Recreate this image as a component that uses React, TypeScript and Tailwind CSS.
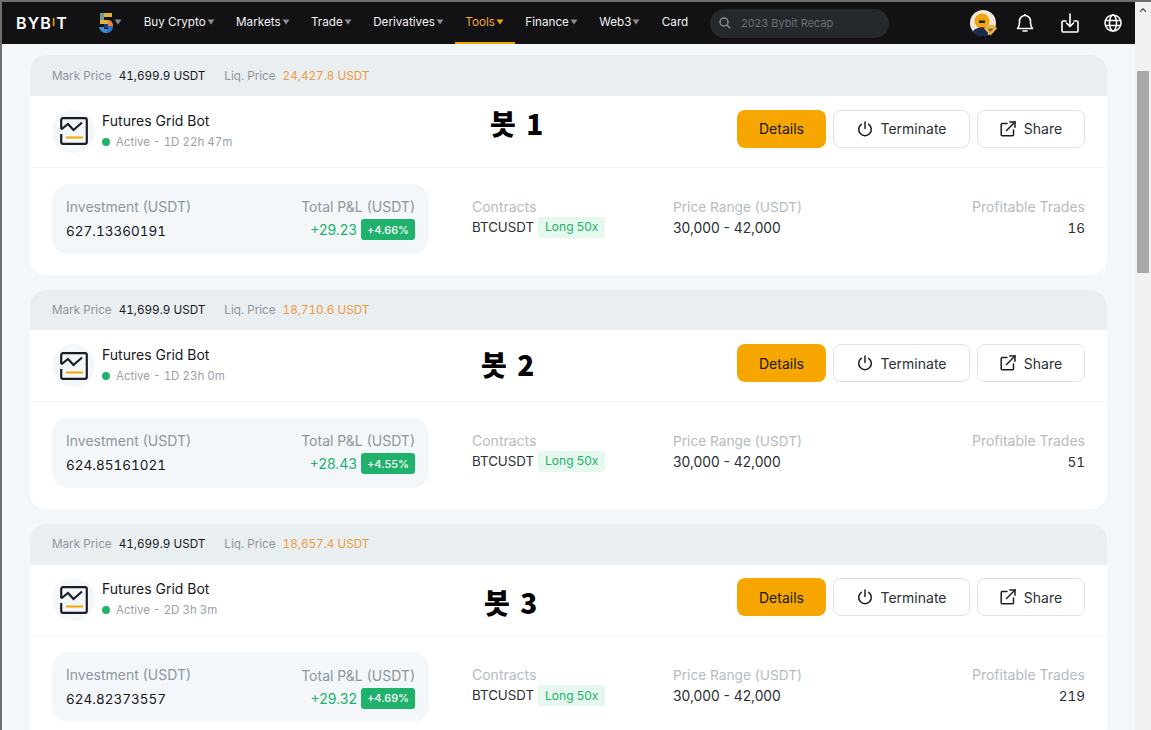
import { ChevronUp } from 'lucide-react';

const navItems = [
    { label: 'Buy Crypto', caret: true },
    { label: 'Markets', caret: true },
    { label: 'Trade', caret: true },
    { label: 'Derivatives', caret: true },
    { label: 'Tools', caret: true, active: true },
    { label: 'Finance', caret: true },
    { label: 'Web3', caret: true },
    { label: 'Card', caret: false },
];

const bots = [
    { liq: '24,427.8', time: '1D 22h 47m', investment: '627.13360191', pnl: '+29.23', pct: '+4.66%', trades: '16', tag: '봇 1', tagClass: 'left-[488px] top-[101px]' },
    { liq: '18,710.6', time: '1D 23h 0m', investment: '624.85161021', pnl: '+28.43', pct: '+4.55%', trades: '51', tag: '봇 2', tagClass: 'left-[479px] top-[342px]' },
    { liq: '18,657.4', time: '2D 3h 3m', investment: '624.82373557', pnl: '+29.32', pct: '+4.69%', trades: '219', tag: '봇 3', tagClass: 'left-[482px] top-[580px]' },
];

const Caret = ({ active }: { active?: boolean }) => (
    <svg width="8" height="6" viewBox="0 0 8 6" className="mt-[-2px]">
        <path d="M0.5 0.5h7L4 5.5z" fill={active ? '#f7a600' : '#8a8d92'} />
    </svg>
);

const FiveLogo = () => (
    <svg width="14" height="20" viewBox="0 0 14 20">
        <path d="M1 0h12v4H5v3h4v4H1z" fill="#e0b13f" />
        <path d="M1 0h4v7H1z" fill="#6f9f8c" />
        <path d="M9 7c3 0 5 2 5 6H9z" fill="#e8873a" />
        <path d="M9 13h5c0 4-2 7-6 7v-4l1-1z" fill="#2f6fc4" />
        <path d="M0 14h5v2h3v4c-4 0-7-2-8-6z" fill="#3d8fd6" />
        <path d="M5 11h4v4H5z" fill="#1d3f78" />
    </svg>
);

const Avatar = () => (
    <svg width="27" height="27" viewBox="0 0 27 27">
        <circle cx="13" cy="13" r="13" fill="#f1e7d6" />
        <circle cx="12" cy="11" r="7.5" fill="#f0a30a" />
        <path d="M9 10.5h6v2.5H9z" fill="#1b1d22" />
        <path d="M3 21c3-4 12-5 15-2v7H10c-3 0-6-2-7-5z" fill="#1f2b4d" />
        <path d="M14 18.5l3-3.5h7l3 3.5-6.500 7z" fill="#e9b44c" />
        <path d="M17.500 18.500h6l-3 3.500z" fill="#8a6a24" />
    </svg>
);

const BotIcon = () => (
    <svg width="28" height="28" viewBox="0 0 28 28" fill="none" stroke="#1b1d22" strokeWidth="2.200">
        <path d="M1.200 12V3A1.800 1.800 0 0 1 3 1.200h22A1.800 1.800 0 0 1 26.800 3v22a1.800 1.800 0 0 1-1.800 1.800H3A1.800 1.800 0 0 1 1.200 25v-8" />
        <path d="M1.200 12.500L8 7l5.500 6L22 5.500" />
        <path d="M6 20.500h17" stroke="#f7a600" />
    </svg>
);

const PowerIcon = () => (
    <svg width="16" height="16" viewBox="0 0 16 16" fill="none" stroke="#1b1d22" strokeWidth="1.500" strokeLinecap="round">
        <path d="M8 1v6.500" />
        <path d="M4.300 3.300a6.300 6.300 0 1 0 7.400 0" />
    </svg>
);

const ShareIcon = () => (
    <svg width="16" height="16" viewBox="0 0 16 16" fill="none" stroke="#1b1d22" strokeWidth="1.500" strokeLinecap="round">
        <path d="M7 2.500H2.200a1 1 0 0 0-1 1v10.300a1 1 0 0 0 1 1h10.300a1 1 0 0 0 1-1V9" />
        <path d="M6.500 9.500L15 1" />
        <path d="M9.800 1H15v5.200" />
    </svg>
);

const BotCard = ({ bot }: { bot: (typeof bots)[number] }) => (
    <div className="h-[219.200px] w-[1077px] shrink-0 overflow-hidden rounded-[16px] bg-white">
        <div className="flex h-[40.800px] items-center bg-[#e9eef0] pl-[22px] pt-[2px] text-[11.700px] tabular-nums">
            <span className="text-[#8e959e]">Mark Price</span>
            <span className="ml-[7px] text-[#16181c]">41,699.9 USDT</span>
            <span className="ml-[19px] text-[#8e959e]">Liq. Price</span>
            <span className="ml-[7px] text-[#ed9a44]">{bot.liq} USDT</span>
        </div>
        <div className="flex h-[71.600px] items-center justify-between border-b border-[#f2f4f6] pl-[22px] pr-[22px]">
            <div className="flex items-center gap-[7px]">
                <div className="flex h-[43px] w-[43px] items-center justify-center rounded-full bg-[#f4f7f9]">
                    <BotIcon />
                </div>
                <div className="flex flex-col gap-[3px]">
                    <span className="text-[14px] leading-[18px] text-[#16181c]">Futures Grid Bot</span>
                    <div className="flex items-center gap-[6px] text-[11.500px] leading-[18px] text-[#9aa1aa] tabular-nums">
                        <span className="h-[8px] w-[8px] rounded-full bg-[#20b26c]" />
                        <span>Active - {bot.time}</span>
                    </div>
                </div>
            </div>
            <div className="mb-[5px] flex items-center gap-[7px] text-[14px]">
                <button className="h-[38px] w-[89px] rounded-[8px] bg-[#f7a600] text-[#16181c]">Details</button>
                <button className="flex h-[38px] w-[137px] items-center justify-center gap-[8px] rounded-[8px] border border-[#dfe3e7] text-[#2b2f36]">
                    <PowerIcon />
                    Terminate
                </button>
                <button className="flex h-[38px] w-[108px] items-center justify-center gap-[8px] rounded-[8px] border border-[#dfe3e7] text-[#2b2f36]">
                    <ShareIcon />
                    Share
                </button>
            </div>
        </div>
        <div className="flex items-start pl-[22px] pr-[22px] pt-[16px] text-[14px]">
            <div className="flex h-[70px] w-[377px] items-center justify-between rounded-[16px] bg-[#f4f7f9] px-[14px]">
                <div className="flex flex-col gap-[4px]">
                    <span className="leading-[20px] text-[#8e959e]">Investment (USDT)</span>
                    <span className="text-[13.500px] leading-[20px] text-[#16181c] tabular-nums">{bot.investment}</span>
                </div>
                <div className="flex flex-col items-end gap-[2px]">
                    <span className="leading-[20px] text-[#8e959e]">Total P&amp;L (USDT)</span>
                    <div className="flex items-center gap-[4px]">
                        <span className="text-[#20b26c]">{bot.pnl}</span>
                        <span className="flex h-[21px] w-[54px] items-center justify-center rounded-[3px] bg-[#20b26c] text-[11px] font-medium text-white">{bot.pct}</span>
                    </div>
                </div>
            </div>
            <div className="ml-[43px] flex h-[70px] w-[201px] flex-col pt-[13px]">
                <span className="leading-[20px] text-[#b5bbc2]">Contracts</span>
                <div className="flex items-center gap-[4px]">
                    <span className="mt-px text-[13.300px] text-[#2b2f36]">BTCUSDT</span>
                    <span className="flex h-[21px] items-center rounded-[3px] bg-[#e6f7ee] px-[7px] text-[12px] text-[#20b26c]">Long 50x</span>
                </div>
            </div>
            <div className="flex h-[70px] flex-col pt-[13px]">
                <span className="text-[13.700px] leading-[20px] text-[#b5bbc2]">Price Range (USDT)</span>
                <span className="mt-px text-[13.800px] leading-[21px] text-[#2b2f36]">30,000 - 42,000</span>
            </div>
            <div className="ml-auto flex h-[70px] flex-col items-end pt-[13px]">
                <span className="leading-[20px] text-[#b5bbc2]">Profitable Trades</span>
                <span className="mt-px text-[13.500px] leading-[21px] text-[#2b2f36] tabular-nums">{bot.trades}</span>
            </div>
        </div>
    </div>
);

const App = () => {
    return (
        <div className="relative flex h-[730px] w-[1151px] overflow-hidden border-t-2 border-l-2 border-[#6f6f6f] bg-[#f4f7f9] font-['Inter','Liberation_Sans',sans-serif]">
            <div className="flex min-w-0 flex-1 flex-col">
                <header className="flex h-[42px] shrink-0 items-center bg-[#121214] text-[11.700px] text-[#f2f3f5]">
                    <span className="ml-[14px] w-[83px] text-[16px] font-semibold leading-none tracking-[1.200px] text-white">
                        BYB<span className="inline-block -translate-y-[3px] text-[11px] text-[#f7a600]">I</span>T
                    </span>
                    <div className="flex w-[34px] items-center gap-px">
                        <FiveLogo />
                        <Caret />
                    </div>
                    <nav className="flex h-full items-stretch">
                        {navItems.map((item) => (
                            <div
                                key={item.label}
                                className={
                                    item.active
                                        ? 'flex items-center gap-px border-y-2 border-t-transparent border-b-[#f7a600] px-[10.700px] text-[#f0a63a]'
                                        : 'flex items-center gap-px border-y-2 border-transparent px-[10.700px]'
                                }
                            >
                                <span>{item.label}</span>
                                {item.caret && <Caret active={item.active} />}
                            </div>
                        ))}
                    </nav>
                    <div className="ml-[11px] flex h-[29px] w-[179px] items-center gap-[10px] rounded-full bg-[#25282c] pl-[9px] text-[11px] text-[#6e7278]">
                        <svg width="12" height="12" viewBox="0 0 12 12" fill="none" stroke="#8a8d92" strokeWidth="1.500">
                            <circle cx="5" cy="5" r="4" />
                            <path d="M8 8l3.200 3.200" />
                        </svg>
                        2023 Bybit Recap
                    </div>
                    <div className="ml-auto flex items-center pr-[13px]">
                        <div className="mr-[19px] flex">
                            <Avatar />
                        </div>
                        <svg className="mr-[27px]" width="18" height="20" viewBox="0 0 18 20" fill="none" stroke="#fff" strokeWidth="1.600" strokeLinejoin="round">
                            <path d="M1.500 15.500c1.500-1.500 2-3 2-5.500V8a5.500 5.500 0 0 1 11 0v2c0 2.500.5 4 2 5.500z" />
                            <path d="M7 18h4" strokeLinecap="round" />
                            <path d="M9 1v1.500" />
                        </svg>
                        <svg className="mr-[25px]" width="18" height="20" viewBox="0 0 18 20" fill="none" stroke="#fff" strokeWidth="1.600" strokeLinecap="round" strokeLinejoin="round">
                            <path d="M5 8H2a1 1 0 0 0-1 1v9a1 1 0 0 0 1 1h14a1 1 0 0 0 1-1V9a1 1 0 0 0-1-1h-3" />
                            <path d="M9 1v12" />
                            <path d="M5.500 10L9 13.500 12.500 10" />
                        </svg>
                        <svg width="18" height="18" viewBox="0 0 18 18" fill="none" stroke="#fff" strokeWidth="1.500">
                            <circle cx="9" cy="9" r="8" />
                            <ellipse cx="9" cy="9" rx="3.500" ry="8" />
                            <path d="M1.500 6.500h15M1.500 11.500h15" />
                        </svg>
                    </div>
                </header>
                <main className="flex flex-col gap-[15px] pl-[28px] pt-[11.400px]">
                    {bots.map((bot) => (
                        <BotCard key={bot.tag} bot={bot} />
                    ))}
                </main>
            </div>
            <div className="flex w-[16px] shrink-0 flex-col items-center bg-[#f1f1f1]">
                <div className="flex h-[15px] items-center text-[#505050]">
                    <ChevronUp size={10} strokeWidth={3} />
                </div>
                <div className="mt-[54px] h-[202px] w-[12px] bg-[#a8a8a8]" />
            </div>
            {bots.map((bot) => (
                <span
                    key={bot.tag}
                    className={`absolute ${bot.tagClass} font-['Noto_Sans_CJK_KR',sans-serif] text-[28px] font-black leading-[40px] tracking-[2px] text-black`}
                >
                    {bot.tag}
                </span>
            ))}
        </div>
    );
};

export default App;
